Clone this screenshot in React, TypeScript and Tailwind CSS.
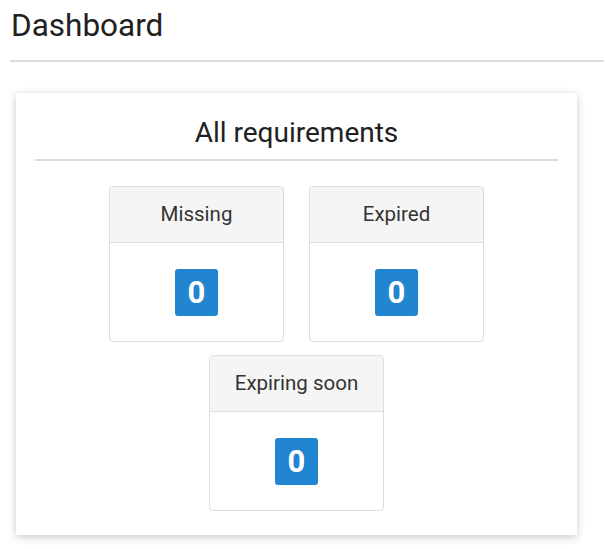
import React from 'react';

const items = ['Missing', 'Expired', 'Expiring soon'];

function CountBox({ label, count }: { label: string; count: number }) {
  return (
    <div className="w-[175px] rounded-[4px] border border-[#dedede] bg-white overflow-hidden">
      <div className="h-[56px] flex items-center justify-center bg-[#f5f5f5] border-b border-[#dedede] text-[20.5px] text-[#333]">
        {label}
      </div>
      <div className="flex justify-center pt-[26px] pb-[25px]">
        <span className="w-[43px] h-[47px] flex items-center justify-center rounded-[3px] bg-[#2185d0] text-white text-[31px] font-bold leading-none">
          {count}
        </span>
      </div>
    </div>
  );
}

export default function App() {
  return (
    <div className="min-h-screen bg-white pl-[10px] pr-[1px] pb-[14px] font-['Roboto',sans-serif] text-[#212121]">
      <h1 className="pt-[7px] text-[31.5px] leading-[38px] font-normal pl-[1px]">Dashboard</h1>
      <div className="mt-[15px] h-[2px] bg-[#dcdcdc]" />

      <div className="ml-[6px] mt-[31px] w-[561px] bg-white shadow-[0_2px_8px_rgba(0,0,0,0.22)] px-[19px] pt-[23px] pb-[24px]">
        <h2 className="text-center text-[28px] leading-[33px] font-normal">All requirements</h2>
        <div className="mt-[10px] h-[2px] bg-[#dcdcdc]" />
        <div className="mt-[25px] flex flex-wrap justify-center gap-x-[25px] gap-y-[13px]">
          {items.map((label) => (
            <CountBox key={label} label={label} count={0} />
          ))}
        </div>
      </div>
    </div>
  );
}
